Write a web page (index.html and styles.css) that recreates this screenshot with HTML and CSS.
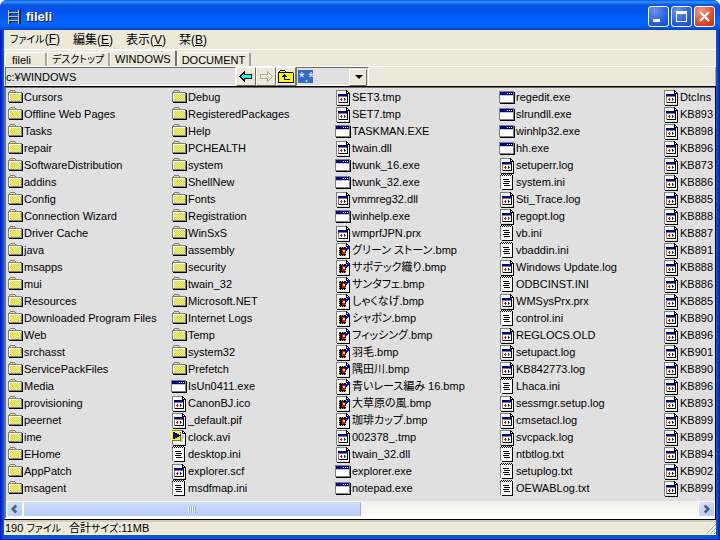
FILE: index.html
```html
<!DOCTYPE html>
<html lang="ja">
<head>
    <meta charset="UTF-8">
    <meta name="viewport" content="width=device-width, initial-scale=1.0">
    <title>fileli</title>
    <link rel="stylesheet" href="styles.css">
</head>
<body>

    <!-- Icon set -->
    <svg class="icon-defs" width="0" height="0" aria-hidden="true">
        <defs>
            <pattern id="dither" width="2" height="2" patternUnits="userSpaceOnUse">
                <rect width="2" height="2" fill="#ff0"/>
                <rect width="1" height="1" fill="#c8c8c8"/>
                <rect x="1" y="1" width="1" height="1" fill="#c8c8c8"/>
            </pattern>
            <symbol id="icon-folder" viewBox="0 0 18 17">
                <path fill="#808080" d="M4 1h5v1h1v1h6v1H3v9H2V3h1V2h1z"/>
                <path fill="url(#dither)" d="M4 2h5v1H4zM3 4h12v9H3z"/>
                <path fill="#fff" d="M3 4h12v1H4v8H3z"/>
                <path fill="#808080" d="M15 4h1v9H3v-1h12z"/>
                <path d="M16 4h1v10H3v-1h13z"/>
            </symbol>
            <symbol id="icon-page" viewBox="0 0 18 17">
                <path fill="#fff" d="M3 2h9l3 3v10H3z"/>
                <path fill="#808080" d="M2 1h10v1H3v14H2z"/>
                <path d="M12 1h1v1h1v1h1v1h1v13H3v-1h12V5h-3z"/>
                <path fill="#fff" d="M13 3h1v1h-1z"/>
            </symbol>
            <symbol id="icon-file" viewBox="0 0 18 17">
                <use href="#icon-page"/>
                <path fill="#808080" d="M4 6h10v8H4z"/>
                <path fill="#fff" d="M5 8h8v5H5z"/>
                <path fill="#000080" d="M4 5h10v2H4z"/>
                <path d="M13 7h1v7H5v-1h8z"/>
                <path fill="#f00" d="M6 10h1v1H6zM7 9h1v3H7z"/>
                <path fill="#cc0" d="M8 10h1v1H8z"/>
                <path fill="#00f" d="M10 9h1v2h-1z"/>
                <path fill="#00a000" d="M11 10h1v1h-1zM10 11h1v1h-1z"/>
            </symbol>
            <symbol id="icon-exe" viewBox="0 0 18 17">
                <path d="M2 3h15v12H2z"/>
                <path fill="#808080" d="M1 2h15v12H1z"/>
                <path fill="#fff" d="M2 7h13v6H2z"/>
                <path fill="#000080" d="M2 3h13v3H2z"/>
                <path fill="#fff" d="M9 4h1v1H9zM11 4h1v1h-1zM13 4h1v1h-1z"/>
                <path fill="#c8c8c8" d="M2 6h13v1H2z"/>
            </symbol>
            <symbol id="icon-text" viewBox="0 0 18 17">
                <path d="M4 3h11v13H4z"/>
                <path fill="#808080" d="M2 2h1v13H2z"/>
                <path fill="#fff" d="M3 1h11v14H3z"/>
                <path d="M3 0h1v1H3zM5 0h1v1H5zM7 0h1v1H7zM9 0h1v1H9zM11 0h1v1h-1zM13 0h1v1h-1zM2 1h1v1H2zM4 1h1v1H4zM6 1h1v1H6zM8 1h1v1H8zM10 1h1v1h-1zM12 1h1v1h-1zM14 1h1v2h-1z"/>
                <path d="M5 5h6v1H5zM6 7h6v1H6zM5 9h6v1H5zM6 11h6v1H6z"/>
            </symbol>
            <symbol id="icon-bmp" viewBox="0 0 18 17">
                <use href="#icon-page"/>
                <path d="M5 5h7v9H5z"/>
                <path fill="#c0a000" d="M5 5h1v1H5zM7 5h1v1H7zM9 5h1v1H9zM5 7h1v1H5zM5 9h1v1H5zM5 11h1v1H5zM5 13h1v1H5zM7 13h1v1H7zM9 13h1v1H9zM11 13h1v1h-1zM11 11h1v1h-1z"/>
                <path fill="#e8e0a0" d="M9 8h2v4H9z"/>
                <path fill="#f00" d="M8 7h3v1H9v2h2v2H8z"/>
                <path fill="#00f" d="M14 4h2v2h-1v1h-1v1h-2V6h1V5h1z"/>
                <path fill="#000080" d="M11 7h1v1h1v1h-2z"/>
            </symbol>
            <symbol id="icon-avi" viewBox="0 0 18 17">
                <use href="#icon-page"/>
                <path fill="#c8c8c8" d="M11 6h3v3h-1v4h-3v-2h1z"/>
                <path fill="#808000" d="M2 3h9v9H2z"/>
                <path fill="#ff0" d="M1 2h9v2H1zM1 4h2v7H1zM8 4h2v7H8zM1 10h9v1H1z"/>
                <path fill="#c8c8c8" d="M3 4h5v6H3z"/>
                <path fill="#000080" d="M3 3h2v1h2v1h2v1h2v1H9v1H7v1H5v1H3z"/>
            </symbol>
        </defs>
    </svg>

    <div class="window">
        <header class="titlebar">
            <svg class="app-icon" viewBox="0 0 16 16" aria-hidden="true">
                <path fill="#303030" d="M3 1h2v14H3zM13 1h2v14h-2zM4 4h10v1H4zM4 8h10v1H4zM4 12h10v1H4z"/>
                <path fill="#c0c0c0" d="M2 1h1v14H2zM12 1h1v14h-1zM3 3h9v1H3zM3 7h9v1H3zM3 11h9v1H3z"/>
            </svg>
            <h1>fileli</h1>
            <div class="caption-buttons">
                <button class="caption-button" aria-label="最小化">
                    <svg viewBox="0 0 19 19"><path fill="#fff" d="M4 12h7v3H4z"/></svg>
                </button>
                <button class="caption-button" aria-label="最大化">
                    <svg viewBox="0 0 19 19"><path fill="#fff" fill-rule="evenodd" d="M4 4h11v11H4zM5 7h9v7H5z"/></svg>
                </button>
                <button class="caption-button close" aria-label="閉じる">
                    <svg class="smooth" viewBox="0 0 19 19"><path fill="none" stroke="#fff" stroke-width="2" d="M5 5l9 9M14 5l-9 9"/></svg>
                </button>
            </div>
        </header>

        <nav class="menubar">
            <button><span class="kana">ファイル</span>(<u>F</u>)</button>
            <button>編集(<u>E</u>)</button>
            <button>表示(<u>V</u>)</button>
            <button>栞(<u>B</u>)</button>
        </nav>

        <div class="tabs" role="tablist">
            <button class="tab" role="tab">fileli</button>
            <button class="tab kana" role="tab">デスクトップ</button>
            <button class="tab active" role="tab" aria-selected="true">WINDOWS</button>
            <button class="tab" role="tab">DOCUMENT</button>
        </div>

        <div class="toolbar">
            <input class="address" type="text" value="c:¥WINDOWS" aria-label="パス">
            <button class="tool" aria-label="戻る">
                <svg viewBox="0 0 16 14"><path d="M6 1h1v3h7v5H7v3H6v-1H5v-1H4V9H3V8H2V7H1V6h1V5h1V4h1V3h1V2h1z"/><path fill="#0ff" d="M5 4h1v1h7v3H6v1H5V8H4V7H3V6h1V5h1z"/></svg>
            </button>
            <button class="tool" aria-label="進む">
                <svg viewBox="0 0 16 14"><path fill="#aca899" d="M9 1h1v1h1v1h1v1h1v1h1v1h1v1h-1v1h-1v1h-1v1h-1v1h-1v1H9V9H2V4h7z"/><path fill="#ece9d8" d="M10 3h1v1h1v1h1v1h1v1h-1v1h-1v1h-1v1h-1V8H3V5h7z"/></svg>
            </button>
            <button class="tool" aria-label="上へ">
                <svg viewBox="0 0 16 14"><path d="M2 0h5v1h1v1h7v1h1v10H0V2h1V1h1z"/><path fill="#ff0" d="M2 1h5v1H2zM1 3h14v9H1z"/><path d="M6 4h1v1h1v1h1v1H7v2h5v1H6V7H4V6h1V5h1z"/></svg>
            </button>
            <div class="filter">
                <select aria-label="フィルタ">
                    <option>*.*</option>
                    <option>*.exe</option>
                    <option>*.txt</option>
                </select>
            </div>
        </div>

        <main class="list-pane">
            <ul class="file-list" id="fileList"></ul>
            <div class="scrollbar">
                <button aria-label="左へ">
                    <svg class="smooth" viewBox="0 0 16 16"><path fill="none" stroke="#4d6185" stroke-width="3" d="M10 4L6 8l4 4"/></svg>
                </button>
                <div class="track">
                    <div class="thumb"><span></span></div>
                </div>
                <button aria-label="右へ">
                    <svg class="smooth" viewBox="0 0 16 16"><path fill="none" stroke="#4d6185" stroke-width="3" d="M6 4l4 4-4 4"/></svg>
                </button>
            </div>
        </main>

        <footer class="statusbar">
            <span>190 <span class="kana">ファイル</span></span>
            <span>合計<span class="kana">サイズ</span>:11MB</span>
            <svg class="grip smooth" viewBox="0 0 12 12" aria-hidden="true"><path stroke="#fff" d="M1 12L12 1M5 12l7-7M9 12l3-3"/><path stroke="#aca899" d="M2 12L12 2M6 12l6-6M10 12l2-2"/></svg>
        </footer>
    </div>

    <script src="files.js"></script>
</body>
</html>
```
FILE: styles.css
```css
* {
    box-sizing: border-box;
}
body {
    margin: 0;
    font-family: "Liberation Sans", "Noto Sans CJK JP", sans-serif;
    font-size: 11px;
    line-height: 16px;
    font-feature-settings: "palt";
    color: #000;
    background-color: #fff;
}
button, input, select {
    font: inherit;
    font-feature-settings: inherit;
    color: inherit;
    margin: 0;
    padding: 0;
    border: none;
    border-radius: 0;
    background: none;
}
svg {
    display: block;
    shape-rendering: crispEdges;
}
.smooth {
    shape-rendering: auto;
}
.icon-defs {
    position: absolute;
}
.kana {
    font-size: 10px;
}
.window {
    display: flex;
    flex-direction: column;
    min-height: 100vh;
    padding: 0 4px 4px 4px;
    border-radius: 7px 7px 0 0;
    background: linear-gradient(to right, #0019cf 0, #0019cf 1px, #0855dd 3px, #0855dd calc(100% - 3px), #001590 100%);
    border-bottom: 1px solid #00138c;
}

/* Title bar */
.titlebar {
    display: flex;
    align-items: center;
    height: 30px;
    margin: 0 -4px;
    padding: 3px 5px 0 6px;
    border-radius: 7px 7px 0 0;
    background: linear-gradient(#0058ee 0, #3593ff 2px, #0855dd 5px, #0050ee 10px, #0066ff 22px, #0060fc 26px, #0042c8 30px);
    color: #fff;
}
.app-icon {
    width: 16px;
    height: 16px;
}
h1 {
    flex: 1;
    margin: 0 0 0 4px;
    font-size: 13px;
    font-weight: bold;
    text-shadow: 1px 1px 1px #0f1089;
}
.caption-buttons {
    display: flex;
    gap: 2px;
}
.caption-button {
    width: 21px;
    height: 21px;
    border: 1px solid #fff;
    border-radius: 3px;
    background: radial-gradient(circle at 30% 20%, #6d94f5, #2a5fe0 60%, #1c49c0);
}
.caption-button.close {
    background: radial-gradient(circle at 30% 20%, #f09a80, #dc4f2c 60%, #b8320f);
}

/* Menu */
.menubar {
    display: flex;
    gap: 13px;
    height: 20px;
    padding: 0 6px;
    font-size: 12px;
    background-color: #ece9d8;
    border-bottom: 1px solid #fff;
}

/* Tabs */
.tabs {
    display: flex;
    align-items: flex-end;
    height: 17px;
    padding-left: 1px;
    background-color: #ece9d8;
    border-bottom: 1px solid #fff;
}
.tab {
    height: 14px;
    padding: 0 4px;
    line-height: 14px;
    border-top: 1px solid #fff;
    border-left: 1px solid #fff;
    border-right: 2px solid #aca899;
    border-radius: 2px 2px 0 0;
}
.tab:first-child {
    padding: 0 14px 0 6px;
}
.tab.active {
    height: 16px;
    border-right-color: #716f64;
}

/* Address row */
.toolbar {
    display: flex;
    height: 19px;
    padding-left: 1px;
    background-color: #ece9d8;
    border-right: 1px solid #aca899;
}
.address {
    width: 231px;
    border: 1px solid;
    border-color: #716f64 #fff #fff #716f64;
    background-color: #e0e0e0;
}
.tool {
    display: flex;
    align-items: center;
    justify-content: center;
    width: 20px;
    border: 1px solid;
    border-color: #fff #716f64 #716f64 #fff;
}
.tool svg {
    width: 16px;
    height: 14px;
}
.filter {
    position: relative;
    width: 73px;
    border: 1px solid;
    border-color: #716f64 #fff #fff #716f64;
    background-color: #e0e0e0;
}
.filter select {
    appearance: none;
    width: 100%;
    height: 17px;
    padding-left: 2px;
    background: linear-gradient(#316ac5, #316ac5) no-repeat 1px 2px / 15px 13px;
    color: #fff;
    font-size: 14px;
}
.filter option {
    color: #000;
}
.filter::before {
    content: "";
    position: absolute;
    top: 1px;
    right: 1px;
    width: 16px;
    height: 15px;
    border: 1px solid;
    border-color: #fff #716f64 #716f64 #fff;
    background-color: #ece9d8;
    pointer-events: none;
}
.filter::after {
    content: "";
    position: absolute;
    top: 7px;
    right: 5px;
    border: 4px solid transparent;
    border-top-color: #000;
    border-bottom: none;
    pointer-events: none;
}

/* File list */
.list-pane {
    flex: 1;
    display: flex;
    flex-direction: column;
    overflow: hidden;
    border: 1px solid;
    border-color: #000 #000 #000 #716f64;
    background-color: #e0e0e0;
}
.file-list {
    flex: 1;
    display: grid;
    grid-auto-flow: column;
    grid-template-rows: repeat(24, 17px);
    grid-auto-columns: 164px;
    margin: 0;
    padding: 1px 0 3px 0;
    border-top: 1px solid #716f64;
    border-left: 1px solid #716f64;
    list-style: none;
    overflow: hidden;
}
.file-list li {
    display: flex;
    line-height: 17px;
    white-space: nowrap;
}
.file-list svg {
    flex: none;
    width: 18px;
    height: 17px;
}

/* Scrollbar */
.scrollbar {
    display: flex;
    height: 18px;
    border-left: 1px solid #716f64;
    border-bottom: 2px solid #fff;
    background: linear-gradient(#f0efe8, #fefefb);
}
.scrollbar button {
    width: 17px;
    border: 1px solid #fff;
    border-radius: 2px;
    background: linear-gradient(135deg, #d6e1fe, #b4c8f6);
}
.scrollbar svg {
    width: 15px;
    height: 14px;
}
.track {
    flex: 1;
    display: flex;
}
.thumb {
    display: flex;
    align-items: center;
    justify-content: center;
    width: 50%;
    border: 1px solid #fff;
    border-right-color: #98b0e8;
    border-radius: 2px;
    background: linear-gradient(#cbdafe, #b9cdfb);
}
.thumb span {
    width: 8px;
    height: 7px;
    background: repeating-linear-gradient(to right, #eef4fe 0, #eef4fe 1px, #8cb0f8 1px, #8cb0f8 2px);
}

/* Status bar */
.statusbar {
    display: flex;
    gap: 8px;
    height: 15px;
    padding-left: 1px;
    line-height: 12px;
    border-top: 2px solid #d0cdbc;
    border-bottom: 1px solid #fff;
    background-color: #ece9d8;
}
.grip {
    align-self: flex-end;
    width: 12px;
    height: 12px;
    margin-left: auto;
}
```
FILE: files.js
```js
const folders = [
    'Cursors', 'Offline Web Pages', 'Tasks', 'repair', 'SoftwareDistribution', 'addins',
    'Config', 'Connection Wizard', 'Driver Cache', 'java', 'msapps', 'mui', 'Resources',
    'Downloaded Program Files', 'Web', 'srchasst', 'ServicePackFiles', 'Media',
    'provisioning', 'peernet', 'ime', 'EHome', 'AppPatch', 'msagent',
    'Debug', 'RegisteredPackages', 'Help', 'PCHEALTH', 'system', 'ShellNew', 'Fonts',
    'Registration', 'WinSxS', 'assembly', 'security', 'twain_32', 'Microsoft.NET',
    'Internet Logs', 'Temp', 'system32', 'Prefetch'
];

const files = [
    'IsUn0411.exe', 'CanonBJ.ico', '_default.pif', 'clock.avi', 'desktop.ini',
    'explorer.scf', 'msdfmap.ini',
    'SET3.tmp', 'SET7.tmp', 'TASKMAN.EXE', 'twain.dll', 'twunk_16.exe', 'twunk_32.exe',
    'vmmreg32.dll', 'winhelp.exe', 'wmprfJPN.prx', 'グリーン ストーン.bmp',
    'サポテック織り.bmp', 'サンタフェ.bmp', 'しゃくなげ.bmp', 'シャボン.bmp',
    'フィッシング.bmp', '羽毛.bmp', '隅田川.bmp', '青いレース編み 16.bmp',
    '大草原の風.bmp', '珈琲カップ.bmp', '002378_.tmp', 'twain_32.dll', 'explorer.exe',
    'notepad.exe',
    'regedit.exe', 'slrundll.exe', 'winhlp32.exe', 'hh.exe', 'setuperr.log',
    'system.ini', 'Sti_Trace.log', 'regopt.log', 'vb.ini', 'vbaddin.ini',
    'Windows Update.log', 'ODBCINST.INI', 'WMSysPrx.prx', 'control.ini', 'REGLOCS.OLD',
    'setupact.log', 'KB842773.log', 'Lhaca.ini', 'sessmgr.setup.log', 'cmsetacl.log',
    'svcpack.log', 'ntbtlog.txt', 'setuplog.txt', 'OEWABLog.txt',
    'DtcIns', 'KB893', 'KB898', 'KB896', 'KB873', 'KB886', 'KB885', 'KB888', 'KB887',
    'KB891', 'KB888', 'KB886', 'KB885', 'KB890', 'KB896', 'KB901', 'KB890', 'KB896',
    'KB893', 'KB899', 'KB899', 'KB894', 'KB902', 'KB899'
];

const iconByExtension = {
    exe: 'exe',
    ini: 'text',
    txt: 'text',
    bmp: 'bmp',
    avi: 'avi'
};

const fileList = document.getElementById('fileList');

function addItem(name, icon) {
    const item = document.createElement('li');
    item.innerHTML = `<svg aria-hidden="true"><use href="#icon-${icon}"/></svg><span>${name}</span>`;
    fileList.appendChild(item);
}

folders.forEach(name => addItem(name, 'folder'));
files.forEach(name => {
    const extension = name.split('.').pop().toLowerCase();
    addItem(name, iconByExtension[extension] || 'file');
});
```
